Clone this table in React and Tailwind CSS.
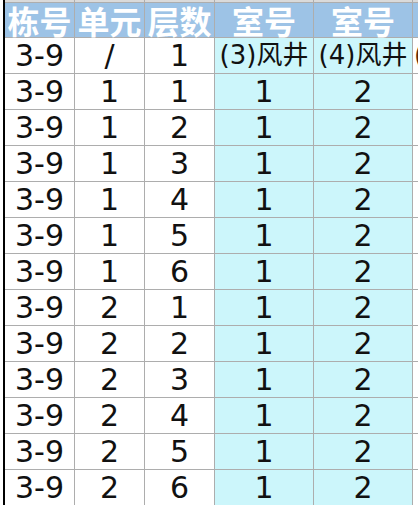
const head = ['栋号', '单元', '层数', '室号', '室号'];

const rows = [
  ['3-9', '/', '1', '(3)风井', '(4)风井'],
  ...[1, 2, 3, 4, 5, 6].map((f) => ['3-9', '1', String(f), '1', '2']),
  ...[1, 2, 3, 4, 5, 6].map((f) => ['3-9', '2', String(f), '1', '2']),
];

const cellFont = { fontFamily: '"DejaVu Sans", "Noto Sans CJK SC", sans-serif' };

export default function App() {
  return (
    <div className="w-[418px] h-[510px] bg-white overflow-hidden pl-[3px]">
      <div className="border-l-2 border-black w-[415px]">
        <div className="grid grid-cols-[69px_69px_69px_98px_98px_1fr] gap-px bg-[#adadad]">
          {/* strip from the row above */}
          {[0, 1, 2, 3, 4, 5].map((i) => (
            <div key={'s' + i} className="h-[2px] bg-[#dadada]" />
          ))}

          {/* header */}
          {head.map((h, i) => (
            <div
              key={'h' + i}
              className="h-[34px] bg-[#9dc3e6] flex items-center justify-center overflow-visible whitespace-nowrap text-[32px] leading-[34px] font-bold text-white"
              style={{ fontFamily: '"Noto Sans CJK SC", sans-serif' }}
            >
              {h}
            </div>
          ))}
          <div className="h-[34px] bg-[#9dc3e6]" />

          {/* body */}
          {rows.map((r, ri) => (
            <div key={'r' + ri} className="contents">
              {r.map((c, ci) => (
                <div
                  key={ci}
                  className={`h-[35px] flex items-center justify-center whitespace-nowrap text-[#111] ${
                    ci > 2 ? 'bg-[#ccf6fb]' : 'bg-white'
                  } ${ri === 0 && ci > 2 ? 'text-[26px]' : 'text-[30px]'}`}
                  style={cellFont}
                >
                  {c}
                </div>
              ))}
              <div
                className="h-[35px] bg-white overflow-hidden flex items-center pl-px whitespace-nowrap text-[26px] text-[#5c2a10]"
                style={cellFont}
              >
                {ri === 0 ? '(5)风井' : ''}
              </div>
            </div>
          ))}
        </div>
      </div>
    </div>
  );
}
